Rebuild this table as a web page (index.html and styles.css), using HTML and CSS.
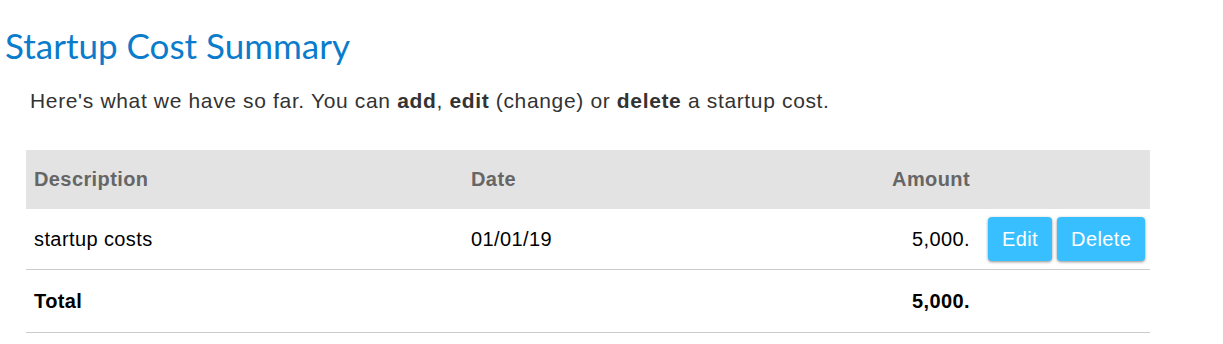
FILE: index.html
```html
<!DOCTYPE html>
<html>
<head>
<meta charset="utf-8">
<link rel="stylesheet" href="styles.css">
</head>
<body>
<h1 class="title">Startup Cost Summary</h1>
<p class="intro">Here's what we have so far. You can <b>add</b>, <b>edit</b> (change) or <b>delete</b> a startup cost.</p>
<table class="costs">
  <thead>
    <tr>
      <th class="c-desc">Description</th>
      <th class="c-date">Date</th>
      <th class="c-amt">Amount</th>
      <th class="c-act"></th>
    </tr>
  </thead>
  <tbody>
    <tr class="row">
      <td class="c-desc">startup costs</td>
      <td class="c-date">01/01/19</td>
      <td class="c-amt">5,000.</td>
      <td class="c-act"><button class="btn">Edit</button><button class="btn">Delete</button></td>
    </tr>
    <tr class="total">
      <td class="c-desc">Total</td>
      <td class="c-date"></td>
      <td class="c-amt">5,000.</td>
      <td class="c-act"></td>
    </tr>
  </tbody>
</table>
</body>
</html>
```
FILE: styles.css
```css
html, body { margin: 0; padding: 0; background: #fff; }
body { font-family: "Liberation Sans", Arial, sans-serif; color: #333; }
.title {
  font-family: Lato, "Open Sans", sans-serif;
  font-weight: 400;
  font-size: 35px;
  color: #0a7ccb;
  margin: 0;
  padding: 25px 0 0 5px;
  line-height: 40px;
}
.intro {
  font-size: 21px;
  letter-spacing: 0.65px;
  margin: 0;
  padding: 24px 0 0 30px;
  line-height: 24px;
  color: #333;
}
.costs {
  margin: 37px 0 0 26px;
  width: 1124px;
  border-collapse: collapse;
  font-size: 20px;
  letter-spacing: 0.4px;
}
.costs th {
  background: #e3e3e3;
  color: #666;
  font-weight: bold;
  text-align: left;
  height: 59px;
  padding: 0 8px;
}
.costs td { padding: 0 8px; color: #000; }
.row td { height: 60px; border-bottom: 1px solid #ccc; }
.total td { height: 62px; border-bottom: 1px solid #ccc; font-weight: bold; }
.c-desc { width: 439px; }
.c-date { width: 382px; }
.costs .c-amt { text-align: right; width: 120px; }
.costs .c-act { padding: 0 4px 0 10px; width: 158px; text-align: left; white-space: nowrap; }
.btn {
  font-family: "Liberation Sans", Arial, sans-serif;
  font-size: 20px;
  letter-spacing: 0.4px;
  color: #fff;
  background: #38bfff;
  border: none;
  border-radius: 4px;
  box-shadow: 0 1px 3px rgba(0,0,0,0.45);
  height: 44px;
  padding: 0 14px;
  margin-right: 5px;
  vertical-align: middle;
  cursor: pointer;
}
.btn:last-child { margin-right: 0; }
```
